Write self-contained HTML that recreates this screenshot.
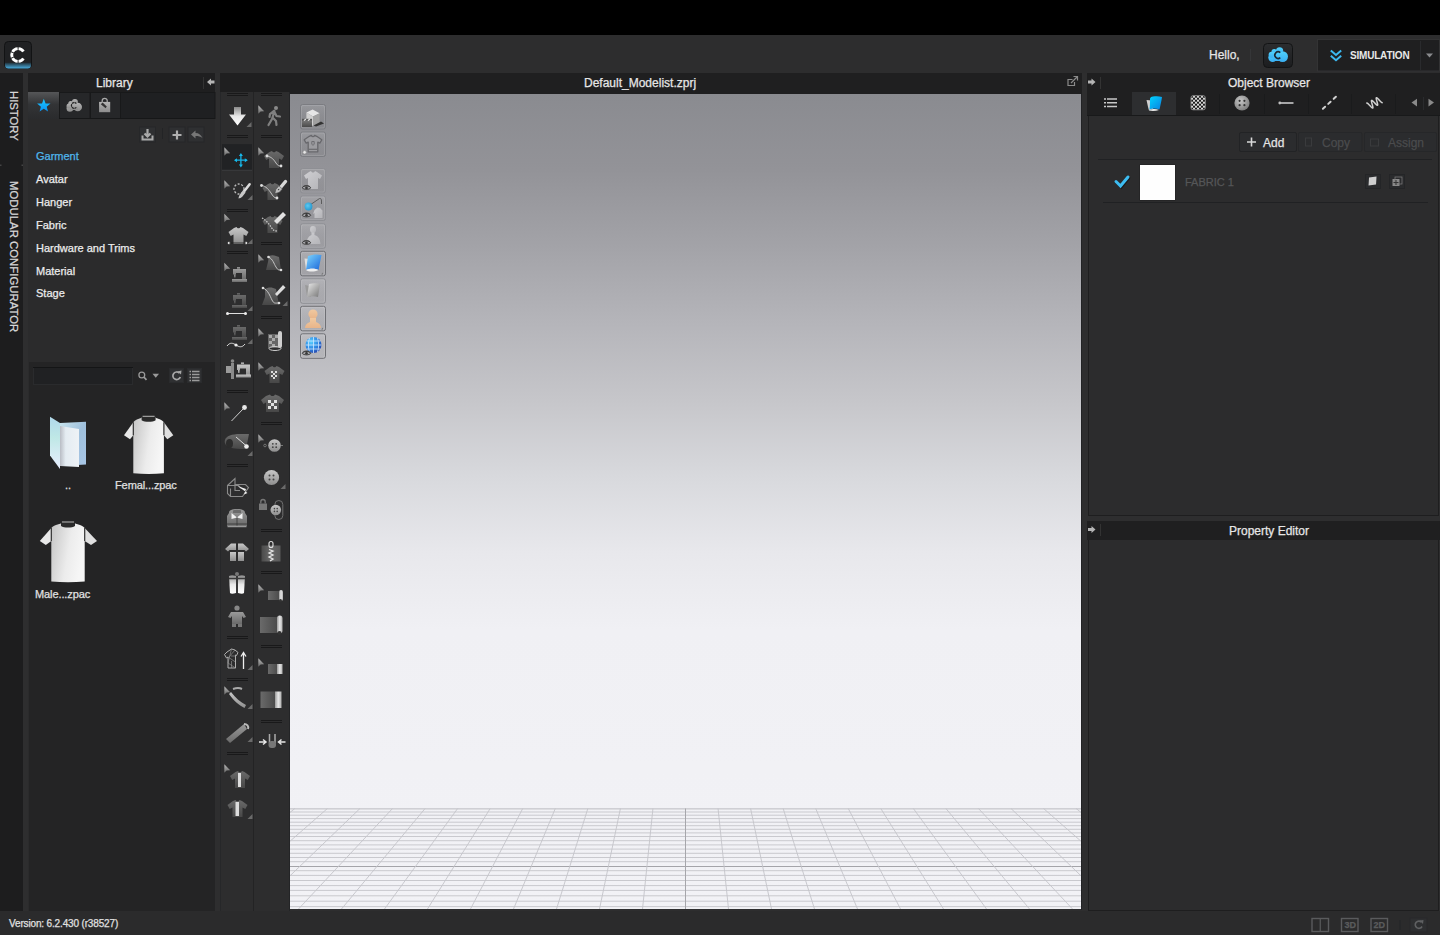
<!DOCTYPE html>
<html><head><meta charset="utf-8">
<style>
*{margin:0;padding:0;box-sizing:border-box}
html,body{width:1440px;height:935px;overflow:hidden;background:#000;font-family:"Liberation Sans",sans-serif;color:#ddd}
.a{position:absolute}
svg{position:absolute;overflow:visible}
#top{left:0;top:0;width:1440px;height:35px;background:#000}
#menu{left:0;top:35px;width:1440px;height:38px;background:#2d2d2e}
#main{left:0;top:73px;width:1440px;height:838px;background:#2e2e2f}
#side{left:0;top:73px;width:23px;height:838px;background:#1d1d1e}
#lib{left:28px;top:73px;width:187px;height:838px;background:#2b2b2c}
#libhd{left:28px;top:73px;width:187px;height:19px;background:#1f1f20}
#libtabs{left:28px;top:92px;width:187px;height:26px;background:#1f1f20}
#files{left:29px;top:362px;width:186px;height:549px;background:#242425}
#vphd{left:220px;top:73px;width:862px;height:21px;background:#1f1f20}
#tb{left:220px;top:92px;width:70px;height:819px;background:#2d2d2e}
#vp{left:290px;top:94px;width:791px;height:815px;background:linear-gradient(#8a8b90 0px,#939398 76px,#a3a3a8 153px,#b5b5ba 230px,#c6c6ca 306px,#d8d9dd 383px,#e8e8ec 459px,#f0f0f4 536px,#f2f2f6 815px)}
#rp{left:1087px;top:73px;width:353px;height:838px;background:#2e2e2f}
#obhd{left:1087px;top:73px;width:353px;height:19px;background:#1f1f20}
#obtabs{left:1087px;top:92px;width:353px;height:24px;background:#1f1f20}
#obc{left:1088px;top:116px;width:351px;height:400px;background:#2c2c2d;border-left:1px solid #1e1e1f;border-bottom:1px solid #1e1e1f;border-right:1px solid #1e1e1f}
#pehd{left:1087px;top:521px;width:353px;height:19px;background:#1f1f20}
#pec{left:1088px;top:540px;width:351px;height:371px;background:#2c2c2d;border-left:1px solid #1e1e1f;border-bottom:1px solid #1e1e1f;border-right:1px solid #1e1e1f}
#status{left:0;top:911px;width:1440px;height:24px;background:#2b2b2c}
.t{position:absolute;white-space:nowrap;font-size:11px;line-height:11px;color:#e6e6e6;-webkit-text-stroke:0.25px currentColor}
.t12{font-size:12px;line-height:12px}
.lib{left:36px;color:#ececec}
</style></head>
<body>
<div class="a" id="top"></div>
<div class="a" id="menu"></div>
<div class="a" id="main"></div>
<div class="a" id="side"></div>
<div class="a" id="lib"></div>
<div class="a" id="libhd"></div>
<div class="a" id="libtabs"></div>
<div class="a" id="files"></div>
<div class="a" id="vphd"></div>
<div class="a" id="tb"></div>
<div class="a" id="vp"></div>
<div class="a" id="rp"></div>
<div class="a" id="obhd"></div>
<div class="a" id="obtabs"></div>
<div class="a" id="obc"></div>
<div class="a" id="pehd"></div>
<div class="a" id="pec"></div>
<div class="a" id="status"></div>

<!-- header texts -->
<div class="t t12" style="left:96px;top:77px">Library</div>
<div class="t t12" style="left:584px;top:77px">Default_Modelist.zprj</div>
<div class="t t12" style="left:1228px;top:77px">Object Browser</div>
<div class="t t12" style="left:1229px;top:525px">Property Editor</div>
<div class="t t12" style="left:1209px;top:49px">Hello,</div>

<!-- library list -->
<div class="t lib" style="top:151px;color:#4fb6ec">Garment</div>
<div class="t lib" style="top:174px">Avatar</div>
<div class="t lib" style="top:197px">Hanger</div>
<div class="t lib" style="top:220px">Fabric</div>
<div class="t lib" style="top:243px">Hardware and Trims</div>
<div class="t lib" style="top:266px">Material</div>
<div class="t lib" style="top:288px">Stage</div>

<div class="t" style="left:9px;top:918.5px;font-size:10px;line-height:10px;letter-spacing:-0.15px;color:#e0e0e0">Version: 6.2.430 (r38527)</div>


<!-- menubar -->
<svg style="left:0;top:0" width="1440" height="935">
<defs>
<linearGradient id="logoBlue" x1="0" y1="0" x2="0" y2="1"><stop offset="0" stop-color="#1e2a31"/><stop offset="1" stop-color="#4aaee0"/></linearGradient>
<linearGradient id="btnG" x1="0" y1="0" x2="0" y2="1"><stop offset="0" stop-color="#2c2d2f"/><stop offset="1" stop-color="#1c1d1f"/></linearGradient>
<linearGradient id="cloudG" x1="0" y1="0" x2="0" y2="1"><stop offset="0" stop-color="#4fd0fb"/><stop offset="1" stop-color="#3ab0f3"/></linearGradient>
</defs>
<rect x="4.5" y="41.5" width="27" height="27" rx="4" fill="#202123" stroke="#121314"/>
<path d="M5 62.5H31V65a3.5 3.5 0 0 1-3.5 3.5h-19A3.5 3.5 0 0 1 5 65z" fill="url(#logoBlue)"/>
<path d="M18.54 48.67A6.35 6.35 0 0 1 23.43 51.54M12.55 51.92A6.35 6.35 0 0 1 17.66 48.67M12.17 57.28A6.35 6.35 0 0 1 12.17 52.72M17.66 61.33A6.35 6.35 0 0 1 12.55 58.08M23.43 58.46A6.35 6.35 0 0 1 18.54 61.33" fill="none" stroke="#fff" stroke-width="2.9" stroke-linecap="butt"/>
<line x1="1250.5" y1="49" x2="1250.5" y2="61" stroke="#353638"/>
<rect x="1263.5" y="43.5" width="29" height="24" rx="4" fill="url(#btnG)" stroke="#131415"/>
<g fill="url(#cloudG)"><circle cx="1272.6" cy="57.6" r="4.3"/><circle cx="1282.6" cy="56.6" r="5.4"/><circle cx="1279.6" cy="50.8" r="3.6"/><circle cx="1274.2" cy="51.8" r="2.7"/><circle cx="1271.6" cy="54.8" r="3"/><rect x="1273" y="52" width="10" height="9"/></g>
<path d="M1280.3 52.6A3.3 3.3 0 1 0 1280.3 57.6" fill="none" stroke="#1b2833" stroke-width="1.6"/>
<rect x="1317.5" y="39.5" width="122" height="31.5" fill="#1f1f20" stroke="#333334"/>
<line x1="1420.5" y1="41" x2="1420.5" y2="70" stroke="#2a2b2d"/>
<path d="M1330.8 50.5L1336 55 1341.2 50.5M1330.8 55.8L1336 60.3 1341.2 55.8" fill="none" stroke="#3cb8f0" stroke-width="2"/>
<path d="M1426 53.5H1433L1429.5 57.5Z" fill="#8a8b8d"/>
</svg>
<div class="t" style="left:1350px;top:51px;font-size:10px;line-height:10px;font-weight:bold;letter-spacing:-0.2px;color:#e8e8e8;-webkit-text-stroke:0">SIMULATION</div>

<!-- grid -->
<svg style="left:0;top:0" width="1440" height="935"><defs><clipPath id="vpclip"><rect x="290" y="808" width="791" height="101"/></clipPath></defs><g clip-path="url(#vpclip)"><line x1="290" y1="809.0" x2="1081" y2="809.0" stroke="#c9c9ce" stroke-width="1"/><line x1="290" y1="812.0" x2="1081" y2="812.0" stroke="#c9c9ce" stroke-width="1"/><line x1="290" y1="815.2" x2="1081" y2="815.2" stroke="#c9c9ce" stroke-width="1"/><line x1="290" y1="818.6" x2="1081" y2="818.6" stroke="#c9c9ce" stroke-width="1"/><line x1="290" y1="822.2" x2="1081" y2="822.2" stroke="#c9c9ce" stroke-width="1"/><line x1="290" y1="825.7" x2="1081" y2="825.7" stroke="#c9c9ce" stroke-width="1"/><line x1="290" y1="829.3" x2="1081" y2="829.3" stroke="#c9c9ce" stroke-width="1"/><line x1="290" y1="832.9" x2="1081" y2="832.9" stroke="#c9c9ce" stroke-width="1"/><line x1="290" y1="836.5" x2="1081" y2="836.5" stroke="#c9c9ce" stroke-width="1"/><line x1="290" y1="840.7" x2="1081" y2="840.7" stroke="#c9c9ce" stroke-width="1"/><line x1="290" y1="844.9" x2="1081" y2="844.9" stroke="#c9c9ce" stroke-width="1"/><line x1="290" y1="849.1" x2="1081" y2="849.1" stroke="#c9c9ce" stroke-width="1"/><line x1="290" y1="853.3" x2="1081" y2="853.3" stroke="#c9c9ce" stroke-width="1"/><line x1="290" y1="857.5" x2="1081" y2="857.5" stroke="#c9c9ce" stroke-width="1"/><line x1="290" y1="861.7" x2="1081" y2="861.7" stroke="#c9c9ce" stroke-width="1"/><line x1="290" y1="866.5" x2="1081" y2="866.5" stroke="#a4a4a9" stroke-width="1"/><line x1="290" y1="870.7" x2="1081" y2="870.7" stroke="#c9c9ce" stroke-width="1"/><line x1="290" y1="875.4" x2="1081" y2="875.4" stroke="#c9c9ce" stroke-width="1"/><line x1="290" y1="880.5" x2="1081" y2="880.5" stroke="#c9c9ce" stroke-width="1"/><line x1="290" y1="885.6" x2="1081" y2="885.6" stroke="#c9c9ce" stroke-width="1"/><line x1="290" y1="890.4" x2="1081" y2="890.4" stroke="#c9c9ce" stroke-width="1"/><line x1="290" y1="895.8" x2="1081" y2="895.8" stroke="#c9c9ce" stroke-width="1"/><line x1="290" y1="901.2" x2="1081" y2="901.2" stroke="#c9c9ce" stroke-width="1"/><line x1="290" y1="906.6" x2="1081" y2="906.6" stroke="#c9c9ce" stroke-width="1"/><line x1="290" y1="808.5" x2="1081" y2="808.5" stroke="#cfcfd4" stroke-width="1"/><line x1="-291.06" y1="808.5" x2="-604.52" y2="909" stroke="#c4c4c9" stroke-width="0.9"/><line x1="-258.51" y1="808.5" x2="-561.52" y2="909" stroke="#c4c4c9" stroke-width="0.9"/><line x1="-225.96" y1="808.5" x2="-518.52" y2="909" stroke="#c4c4c9" stroke-width="0.9"/><line x1="-193.40" y1="808.5" x2="-475.52" y2="909" stroke="#c4c4c9" stroke-width="0.9"/><line x1="-160.85" y1="808.5" x2="-432.52" y2="909" stroke="#c4c4c9" stroke-width="0.9"/><line x1="-128.30" y1="808.5" x2="-389.52" y2="909" stroke="#c4c4c9" stroke-width="0.9"/><line x1="-95.75" y1="808.5" x2="-346.52" y2="909" stroke="#c4c4c9" stroke-width="0.9"/><line x1="-63.20" y1="808.5" x2="-303.51" y2="909" stroke="#c4c4c9" stroke-width="0.9"/><line x1="-30.64" y1="808.5" x2="-260.51" y2="909" stroke="#c4c4c9" stroke-width="0.9"/><line x1="1.91" y1="808.5" x2="-217.51" y2="909" stroke="#c4c4c9" stroke-width="0.9"/><line x1="34.46" y1="808.5" x2="-174.51" y2="909" stroke="#c4c4c9" stroke-width="0.9"/><line x1="67.01" y1="808.5" x2="-131.51" y2="909" stroke="#c4c4c9" stroke-width="0.9"/><line x1="99.56" y1="808.5" x2="-88.51" y2="909" stroke="#c4c4c9" stroke-width="0.9"/><line x1="132.12" y1="808.5" x2="-45.51" y2="909" stroke="#c4c4c9" stroke-width="0.9"/><line x1="164.67" y1="808.5" x2="-2.51" y2="909" stroke="#c4c4c9" stroke-width="0.9"/><line x1="197.22" y1="808.5" x2="40.49" y2="909" stroke="#c4c4c9" stroke-width="0.9"/><line x1="229.77" y1="808.5" x2="83.49" y2="909" stroke="#c4c4c9" stroke-width="0.9"/><line x1="262.32" y1="808.5" x2="126.49" y2="909" stroke="#c4c4c9" stroke-width="0.9"/><line x1="294.88" y1="808.5" x2="169.49" y2="909" stroke="#c4c4c9" stroke-width="0.9"/><line x1="327.43" y1="808.5" x2="212.49" y2="909" stroke="#c4c4c9" stroke-width="0.9"/><line x1="359.98" y1="808.5" x2="255.49" y2="909" stroke="#c4c4c9" stroke-width="0.9"/><line x1="392.53" y1="808.5" x2="298.49" y2="909" stroke="#c4c4c9" stroke-width="0.9"/><line x1="425.08" y1="808.5" x2="341.49" y2="909" stroke="#c4c4c9" stroke-width="0.9"/><line x1="457.64" y1="808.5" x2="384.50" y2="909" stroke="#c4c4c9" stroke-width="0.9"/><line x1="490.19" y1="808.5" x2="427.50" y2="909" stroke="#c4c4c9" stroke-width="0.9"/><line x1="522.74" y1="808.5" x2="470.50" y2="909" stroke="#c4c4c9" stroke-width="0.9"/><line x1="555.29" y1="808.5" x2="513.50" y2="909" stroke="#c4c4c9" stroke-width="0.9"/><line x1="587.84" y1="808.5" x2="556.50" y2="909" stroke="#c4c4c9" stroke-width="0.9"/><line x1="620.40" y1="808.5" x2="599.50" y2="909" stroke="#c4c4c9" stroke-width="0.9"/><line x1="652.95" y1="808.5" x2="642.50" y2="909" stroke="#c4c4c9" stroke-width="0.9"/><line x1="685.50" y1="808.5" x2="685.50" y2="909" stroke="#a6a6ab" stroke-width="1"/><line x1="718.05" y1="808.5" x2="728.50" y2="909" stroke="#c4c4c9" stroke-width="0.9"/><line x1="750.60" y1="808.5" x2="771.50" y2="909" stroke="#c4c4c9" stroke-width="0.9"/><line x1="783.16" y1="808.5" x2="814.50" y2="909" stroke="#c4c4c9" stroke-width="0.9"/><line x1="815.71" y1="808.5" x2="857.50" y2="909" stroke="#c4c4c9" stroke-width="0.9"/><line x1="848.26" y1="808.5" x2="900.50" y2="909" stroke="#c4c4c9" stroke-width="0.9"/><line x1="880.81" y1="808.5" x2="943.50" y2="909" stroke="#c4c4c9" stroke-width="0.9"/><line x1="913.36" y1="808.5" x2="986.50" y2="909" stroke="#c4c4c9" stroke-width="0.9"/><line x1="945.92" y1="808.5" x2="1029.51" y2="909" stroke="#c4c4c9" stroke-width="0.9"/><line x1="978.47" y1="808.5" x2="1072.51" y2="909" stroke="#c4c4c9" stroke-width="0.9"/><line x1="1011.02" y1="808.5" x2="1115.51" y2="909" stroke="#c4c4c9" stroke-width="0.9"/><line x1="1043.57" y1="808.5" x2="1158.51" y2="909" stroke="#c4c4c9" stroke-width="0.9"/><line x1="1076.12" y1="808.5" x2="1201.51" y2="909" stroke="#c4c4c9" stroke-width="0.9"/><line x1="1108.68" y1="808.5" x2="1244.51" y2="909" stroke="#c4c4c9" stroke-width="0.9"/><line x1="1141.23" y1="808.5" x2="1287.51" y2="909" stroke="#c4c4c9" stroke-width="0.9"/><line x1="1173.78" y1="808.5" x2="1330.51" y2="909" stroke="#c4c4c9" stroke-width="0.9"/><line x1="1206.33" y1="808.5" x2="1373.51" y2="909" stroke="#c4c4c9" stroke-width="0.9"/><line x1="1238.88" y1="808.5" x2="1416.51" y2="909" stroke="#c4c4c9" stroke-width="0.9"/><line x1="1271.44" y1="808.5" x2="1459.51" y2="909" stroke="#c4c4c9" stroke-width="0.9"/><line x1="1303.99" y1="808.5" x2="1502.51" y2="909" stroke="#c4c4c9" stroke-width="0.9"/><line x1="1336.54" y1="808.5" x2="1545.51" y2="909" stroke="#c4c4c9" stroke-width="0.9"/><line x1="1369.09" y1="808.5" x2="1588.51" y2="909" stroke="#c4c4c9" stroke-width="0.9"/><line x1="1401.64" y1="808.5" x2="1631.51" y2="909" stroke="#c4c4c9" stroke-width="0.9"/><line x1="1434.20" y1="808.5" x2="1674.51" y2="909" stroke="#c4c4c9" stroke-width="0.9"/><line x1="1466.75" y1="808.5" x2="1717.52" y2="909" stroke="#c4c4c9" stroke-width="0.9"/><line x1="1499.30" y1="808.5" x2="1760.52" y2="909" stroke="#c4c4c9" stroke-width="0.9"/><line x1="1531.85" y1="808.5" x2="1803.52" y2="909" stroke="#c4c4c9" stroke-width="0.9"/><line x1="1564.40" y1="808.5" x2="1846.52" y2="909" stroke="#c4c4c9" stroke-width="0.9"/><line x1="1596.96" y1="808.5" x2="1889.52" y2="909" stroke="#c4c4c9" stroke-width="0.9"/><line x1="1629.51" y1="808.5" x2="1932.52" y2="909" stroke="#c4c4c9" stroke-width="0.9"/><line x1="1662.06" y1="808.5" x2="1975.52" y2="909" stroke="#c4c4c9" stroke-width="0.9"/></g></svg>
<!-- sidebar + library -->
<div class="t" style="left:7px;top:91px;font-size:11.3px;line-height:11px;transform-origin:0 0;transform:translate(12px,0) rotate(90deg);color:#d8d8d8;letter-spacing:0px">HISTORY</div>
<div class="t" style="left:7px;top:181px;font-size:11.3px;line-height:11px;transform-origin:0 0;transform:translate(12px,0) rotate(90deg);color:#d8d8d8;letter-spacing:0.05px">MODULAR CONFIGURATOR</div>
<svg style="left:0;top:0" width="1440" height="935">
<defs>
<linearGradient id="selTab" x1="0" y1="0" x2="0" y2="1"><stop offset="0" stop-color="#555658"/><stop offset="0.45" stop-color="#333436"/><stop offset="1" stop-color="#2a2b2d"/></linearGradient>
<linearGradient id="starG" x1="0" y1="0" x2="0" y2="1"><stop offset="0" stop-color="#1cc8ff"/><stop offset="1" stop-color="#0a92f2"/></linearGradient>
<linearGradient id="grayIc" x1="0" y1="0" x2="0" y2="1"><stop offset="0" stop-color="#b4b4b4"/><stop offset="1" stop-color="#8c8c8c"/></linearGradient>
</defs>
<rect x="0" y="164.5" width="1.5" height="1.5" fill="#444"/>
<rect x="21.5" y="164.5" width="1.5" height="1.5" fill="#444"/>
<line x1="203.5" y1="77" x2="203.5" y2="89" stroke="#333"/>
<path d="M207 82L211 78.5V80.5H214.5V83.5H211V85.5Z" fill="#b5b5b5"/>
<rect x="28" y="92" width="31" height="27" fill="url(#selTab)"/>
<rect x="59.5" y="92.5" width="30.5" height="26" fill="#262729" stroke="#18191a"/>
<rect x="90.5" y="92.5" width="30" height="26" fill="#262729" stroke="#18191a"/>
<rect x="120.5" y="92.5" width="94.5" height="26" fill="#1f2022" stroke="#18191a"/>
<rect x="59" y="118" width="156" height="1" fill="#161718"/>
<path d="M43.8 98.8L45.6 103.4 50.5 103.6 46.7 106.7 48 111.5 43.8 108.8 39.6 111.5 40.9 106.7 37.1 103.6 42 103.4Z" fill="url(#starG)"/>
<g fill="url(#grayIc)"><circle cx="69.9" cy="108.4" r="3.3"/><circle cx="77.7" cy="107" r="4.3"/><circle cx="74.9" cy="101.9" r="3"/><circle cx="70.8" cy="103.6" r="2.5"/><circle cx="69" cy="106" r="2.5"/><rect x="70" y="103" width="8" height="7"/></g>
<path d="M74.44 102.71A2.8 2.8 0 0 1 76.34 103.70M72.06 103.70A2.8 2.8 0 0 1 73.96 102.71M71.66 106.68A2.8 2.8 0 0 1 71.78 104.10M73.96 108.29A2.8 2.8 0 0 1 71.91 107.11M76.34 107.30A2.8 2.8 0 0 1 74.44 108.29" fill="none" stroke="#252525" stroke-width="1.2"/>
<rect x="99.1" y="101.9" width="11.1" height="10.3" fill="url(#grayIc)"/>
<path d="M102.2 102V100.8A2.5 2.5 0 0 1 107.2 100.8V102" fill="none" stroke="#aaa" stroke-width="1.3"/>
<path d="M100.8 104.2L102.6 102.6 106.8 106.6 105.6 108.2Z" fill="#333"/>
<rect x="139.5" y="127" width="16" height="15" fill="#2f3032" stroke="#262729"/>
<path d="M147.5 129V136M144.5 133.5L147.5 136.5 150.5 133.5" fill="none" stroke="#aaa" stroke-width="2.2"/>
<path d="M142.5 135.5V139.5H152.5V135.5" fill="none" stroke="#aaa" stroke-width="2"/>
<line x1="162.5" y1="128" x2="162.5" y2="139" stroke="#232426"/>
<rect x="169" y="127" width="16" height="15" fill="#2f3032" stroke="#262729"/>
<path d="M177 130.5V139.5M172.5 135H181.5" stroke="#b0b0b0" stroke-width="2.2"/>
<rect x="188" y="127" width="16" height="15" fill="#2f3032" stroke="#262729"/>
<path d="M191 134.5L195.5 130.5V133C199 133 201 135 202.5 138 200.5 136.5 198.5 136 195.5 136V138.5Z" fill="#777"/>
<rect x="33.5" y="367.5" width="99" height="17" fill="#202123" stroke="#2a2b2d"/>
<line x1="33" y1="367.5" x2="133" y2="367.5" stroke="#141516"/>
<circle cx="141.8" cy="375" r="2.9" fill="none" stroke="#9a9a9a" stroke-width="1.3"/>
<path d="M143.8 377L146.5 379.8" stroke="#9a9a9a" stroke-width="1.8"/>
<path d="M152.5 373.8H159L155.75 377.8Z" fill="#9a9a9a"/>
<rect x="169.5" y="368.5" width="14" height="14" fill="#2f3032" stroke="#2a2b2d"/>
<path d="M179.5 373.2A3.8 3.8 0 1 0 180.3 377" fill="none" stroke="#a8a8a8" stroke-width="1.7"/>
<path d="M177.5 371.5L181.5 370.5 181 374.5Z" fill="#a8a8a8"/>
<rect x="187.5" y="368.5" width="14" height="14" fill="#2f3032" stroke="#2a2b2d"/>
<path d="M189.5 371.5h1.5M192 371.5h7.5M189.5 374.5h1.5M192 374.5h7.5M189.5 377.5h1.5M192 377.5h7.5M189.5 380.5h1.5M192 380.5h7.5" stroke="#9a9a9a" stroke-width="1.6"/>
</svg>

<!-- right panel -->
<svg style="left:0;top:0" width="1440" height="935">
<defs>
<linearGradient id="blueSheet" x1="0" y1="0" x2="1" y2="1"><stop offset="0" stop-color="#00d4ff"/><stop offset="1" stop-color="#0a7fe0"/></linearGradient>
<radialGradient id="btnR" cx="0.4" cy="0.35" r="0.7"><stop offset="0" stop-color="#c8c8c8"/><stop offset="1" stop-color="#7a7a7a"/></radialGradient>
<pattern id="checker" x="1191" y="95.7" width="4" height="4" patternUnits="userSpaceOnUse"><rect width="4" height="4" fill="#d8d8d8"/><rect width="2" height="2" fill="#1a1a1a"/><rect x="2" y="2" width="2" height="2" fill="#1a1a1a"/></pattern>
</defs>
<line x1="1081.5" y1="94" x2="1081.5" y2="910" stroke="#222325"/>
<path d="M1072.5 79.5H1068V85.5H1074.5V82" fill="none" stroke="#8a8a8a" stroke-width="1.2"/>
<path d="M1071 83L1077 77M1073.5 76.5H1077.5V80.5" fill="none" stroke="#8a8a8a" stroke-width="1.2"/>
<path d="M1095.5 82L1091.5 78.5V80.5H1088V83.5H1091.5V85.5Z" fill="#b5b5b5"/>
<line x1="1100.5" y1="77" x2="1100.5" y2="89" stroke="#333"/>
<path d="M1095.5 529.5L1091.5 526V528H1088V531H1091.5V533Z" fill="#b5b5b5"/>
<line x1="1100.5" y1="524" x2="1100.5" y2="536" stroke="#333"/>
<line x1="1087" y1="115.5" x2="1440" y2="115.5" stroke="#18191a"/>
<rect x="1132" y="92" width="44" height="23" fill="#2d2e30"/>
<line x1="1219.5" y1="94" x2="1219.5" y2="114" stroke="#1a1b1c"/>
<line x1="1264.5" y1="94" x2="1264.5" y2="114" stroke="#1a1b1c"/>
<line x1="1308.5" y1="94" x2="1308.5" y2="114" stroke="#1a1b1c"/>
<line x1="1351.5" y1="94" x2="1351.5" y2="114" stroke="#1a1b1c"/>
<line x1="1395.5" y1="94" x2="1395.5" y2="114" stroke="#1a1b1c"/>
<line x1="1423.5" y1="97" x2="1423.5" y2="110" stroke="#2a2b2d"/>
<path d="M1104 99h2M1107 99h10M1104 102.8h2M1107 102.8h10M1104 106.5h2M1107 106.5h10" stroke="#c8c8c8" stroke-width="1.6"/>
<path d="M1146.5 100L1152 100.5 1153 109 1149 110.5C1148 108 1147.5 104 1146.5 100Z" fill="#d0d0d0"/><path d="M1149 110.5C1152 108.5 1156 108.5 1159 110 1156 111 1152 111.2 1149 110.5Z" fill="#e8e8e8"/>
<path d="M1150 98.5C1150.5 97.2 1151.5 96.8 1153 96.5 1156 96 1159 96 1162 97 1161.5 101 1160.5 105 1159.5 109.5 1156 108 1152.5 108 1149.5 109.5 1150 106 1150 102 1150 98.5Z" fill="url(#blueSheet)"/>
<rect x="1191" y="95.7" width="14.3" height="14.1" rx="2" fill="url(#checker)"/>
<rect x="1191" y="95.7" width="14.3" height="14.1" rx="2" fill="none" stroke="#9a9a9a" stroke-width="0.8"/>
<circle cx="1242" cy="103" r="7.6" fill="url(#btnR)"/>
<circle cx="1239.6" cy="100.8" r="1.1" fill="#333"/><circle cx="1244.4" cy="100.8" r="1.1" fill="#333"/><circle cx="1239.6" cy="105.2" r="1.1" fill="#333"/><circle cx="1244.4" cy="105.2" r="1.1" fill="#333"/>
<circle cx="1279.8" cy="103" r="1.4" fill="#c0c0c0"/>
<line x1="1279.5" y1="103" x2="1293.5" y2="103" stroke="#c0c0c0" stroke-width="1.7"/>
<path d="M1322.90 108.80L1325.11 106.76M1328.23 103.88L1330.57 101.72M1333.69 98.84L1335.90 96.80" stroke="#d0d0d0" stroke-width="2" stroke-linecap="round"/>
<path d="M1366.83 103.06 L1367.02 103.04 L1367.27 103.13 L1367.58 103.34 L1367.95 103.65 L1368.36 104.04 L1368.82 104.50 L1369.30 105.00 L1369.79 105.53 L1370.28 106.06 L1370.76 106.56 L1371.22 107.02 L1371.63 107.41 L1372.00 107.72 L1372.31 107.93 L1372.56 108.02 L1372.75 108.00 L1372.86 107.85 L1372.91 107.59 L1372.89 107.22 L1372.82 106.74 L1372.70 106.18 L1372.55 105.56 L1372.37 104.89 L1372.17 104.19 L1371.97 103.49 L1371.79 102.82 L1371.64 102.20 L1371.52 101.64 L1371.45 101.16 L1371.43 100.79 L1371.48 100.53 L1371.59 100.38 L1371.78 100.36 L1372.03 100.45 L1372.34 100.66 L1372.71 100.97 L1373.12 101.36 L1373.58 101.82 L1374.06 102.32 L1374.55 102.85 L1375.04 103.38 L1375.52 103.88 L1375.98 104.34 L1376.39 104.73 L1376.76 105.04 L1377.07 105.25 L1377.32 105.34 L1377.51 105.32 L1377.62 105.17 L1377.67 104.91 L1377.65 104.54 L1377.58 104.06 L1377.46 103.50 L1377.31 102.88 L1377.13 102.21 L1376.93 101.51 L1376.73 100.81 L1376.55 100.14 L1376.40 99.52 L1376.28 98.96 L1376.21 98.48 L1376.19 98.11 L1376.24 97.85 L1376.35 97.70 L1376.54 97.68 L1376.79 97.77 L1377.10 97.98 L1377.47 98.29 L1377.88 98.68 L1378.34 99.14 L1378.82 99.64 L1379.31 100.17 L1379.80 100.70 L1380.28 101.20 L1380.74 101.66 L1381.15 102.05 L1381.52 102.36 L1381.83 102.57 L1382.08 102.66 L1382.27 102.64" fill="none" stroke="#cfcfcf" stroke-width="1.5" stroke-linecap="round" stroke-linejoin="round"/>
<path d="M1417 98.8V106.4L1411.5 102.6Z" fill="#8a8a8a"/>
<path d="M1428.5 98.8V106.4L1434 102.6Z" fill="#8a8a8a"/>
<line x1="1098" y1="159.5" x2="1432" y2="159.5" stroke="#202123"/>
<line x1="1103" y1="202.5" x2="1428" y2="202.5" stroke="#202123"/>
<rect x="1239.5" y="132.5" width="57" height="19" rx="1.5" fill="#2b2c2e" stroke="#222325"/>
<rect x="1298.5" y="132.5" width="63.5" height="19" rx="1.5" fill="#2b2c2e" stroke="#262729"/>
<rect x="1364.5" y="132.5" width="72" height="19" rx="1.5" fill="#2b2c2e" stroke="#262729"/>
<path d="M1251.5 137.5V146.5M1247 142H1256" stroke="#d8d8d8" stroke-width="1.6"/>
<rect x="1305.5" y="138" width="6" height="8" fill="none" stroke="#3a3b3d" stroke-width="1"/>
<rect x="1370.5" y="139" width="8" height="7" fill="none" stroke="#3a3b3d" stroke-width="1"/>
<path d="M1116 181.5L1120.5 186 1128 177" fill="none" stroke="#1a1b1c" stroke-width="3" stroke-linecap="round" transform="translate(0.8,1)"/>
<path d="M1116 181.5L1120.5 186 1128 177" fill="none" stroke="#3dbdf2" stroke-width="3" stroke-linecap="round"/>
<rect x="1139.5" y="164.5" width="36" height="36" fill="#1e1f21"/>
<rect x="1140" y="165" width="35" height="35" fill="#fefefe"/>
<rect x="1365.5" y="174.5" width="15" height="14" fill="#2a2b2d" stroke="#242527"/>
<path d="M1369 177.5L1376.5 176.5 1376 184.5 1368.5 185.5Z" fill="#cfcfcf"/>
<rect x="1389.5" y="174.5" width="15" height="14" fill="#2a2b2d" stroke="#242527"/>
<rect x="1392.5" y="179" width="7" height="7" fill="#8a8a8a"/>
<rect x="1395" y="177" width="7" height="7" fill="none" stroke="#777" stroke-width="0.8"/>
<path d="M1396 180V185M1393.5 182.5H1398.5" stroke="#333" stroke-width="1"/>
<!-- status icons -->
<rect x="1312" y="918.5" width="16.5" height="13" fill="none" stroke="#5a5b5d" stroke-width="1.4"/>
<line x1="1320.25" y1="918.5" x2="1320.25" y2="931.5" stroke="#5a5b5d" stroke-width="1.2"/>
<rect x="1341.5" y="918.5" width="16.5" height="13" fill="none" stroke="#5a5b5d" stroke-width="1.4"/>
<rect x="1371" y="918.5" width="16.5" height="13" fill="none" stroke="#5a5b5d" stroke-width="1.4"/>
<line x1="1400" y1="920" x2="1400" y2="930" stroke="#232426"/>
<rect x="1410" y="918" width="17" height="14" fill="#2e2f31" stroke="#28292b"/>
<path d="M1421.5 922.3A3.6 3.6 0 1 0 1422 926.5" fill="none" stroke="#5f6062" stroke-width="1.6"/>
<path d="M1419.5 920.5L1423.5 920 1423 924Z" fill="#5f6062"/>
</svg>
<div class="t t12" style="left:1263px;top:137px;color:#e4e4e4">Add</div>
<div class="t t12" style="left:1322px;top:137px;color:#4a4b4d">Copy</div>
<div class="t t12" style="left:1388px;top:137px;color:#4a4b4d">Assign</div>
<div class="t" style="left:1185px;top:177px;color:#555658">FABRIC 1</div>
<div class="t" style="left:1344.5px;top:921px;font-size:9px;line-height:9px;font-weight:bold;color:#5a5b5d">3D</div>
<div class="t" style="left:1373.5px;top:921px;font-size:9px;line-height:9px;font-weight:bold;color:#5a5b5d">2D</div>
<!--TB--><svg style="left:0;top:0" width="1440" height="935"><defs>
<linearGradient id="gPtr" x1="0" y1="0" x2="0" y2="1"><stop offset="0" stop-color="#b8b8b8"/><stop offset="1" stop-color="#686868"/></linearGradient>
<linearGradient id="gWhite" x1="0" y1="0" x2="0" y2="1"><stop offset="0" stop-color="#8a8a8a"/><stop offset="0.5" stop-color="#e8e8e8"/><stop offset="1" stop-color="#ffffff"/></linearGradient>
<linearGradient id="gDark" x1="0" y1="0" x2="0" y2="1"><stop offset="0" stop-color="#6a6a6a"/><stop offset="1" stop-color="#474747"/></linearGradient>
<linearGradient id="gMid" x1="0" y1="0" x2="0" y2="1"><stop offset="0" stop-color="#9a9a9a"/><stop offset="1" stop-color="#6a6a6a"/></linearGradient>
<linearGradient id="gLight" x1="0" y1="0" x2="0" y2="1"><stop offset="0" stop-color="#c8c8c8"/><stop offset="1" stop-color="#8e8e8e"/></linearGradient>
<linearGradient id="gRoll" x1="0" y1="0" x2="1" y2="0"><stop offset="0" stop-color="#454545"/><stop offset="0.75" stop-color="#7a7a7a"/><stop offset="0.76" stop-color="#bdbdbd"/><stop offset="1" stop-color="#e0e0e0"/></linearGradient>
<linearGradient id="gZip" x1="0" y1="0" x2="1" y2="0"><stop offset="0" stop-color="#4a4a4a"/><stop offset="0.5" stop-color="#6a6a6a"/><stop offset="1" stop-color="#5a5a5a"/></linearGradient>
<linearGradient id="gBody" x1="0" y1="0" x2="1" y2="0"><stop offset="0" stop-color="#6a6a6a"/><stop offset="1" stop-color="#4a4a4a"/></linearGradient><linearGradient id="gCyl" x1="0" y1="0" x2="1" y2="0"><stop offset="0" stop-color="#9a9a9a"/><stop offset="0.5" stop-color="#e8e8e8"/><stop offset="1" stop-color="#b0b0b0"/></linearGradient>
<symbol id="ptr" overflow="visible"><path d="M0.3 0.3L6.2 6.2 2.6 6.6 0.3 8.8Z" fill="url(#gPtr)"/></symbol>
<symbol id="cor" overflow="visible"><path d="M5 0V5H0Z" fill="#6a6a6a"/></symbol>
<symbol id="shirt" overflow="visible"><path d="M-4.5 -8L-2 -9C-1.2 -7.2 1.2 -7.2 2 -9L4.5 -8 10 -4 7.8 0 5 -1.6V8H-5V-1.6L-7.8 0-10-4Z"/></symbol>
</defs><path d="M227.0 93.5H248.0M227.0 95.5H248.0" stroke="#19191a" stroke-width="1"/><path d="M227.0 135.5H248.0M227.0 137.5H248.0" stroke="#19191a" stroke-width="1"/><path d="M227.0 209.5H248.0M227.0 211.5H248.0" stroke="#19191a" stroke-width="1"/><path d="M227.0 251.5H248.0M227.0 253.5H248.0" stroke="#19191a" stroke-width="1"/><path d="M227.0 390.5H248.0M227.0 392.5H248.0" stroke="#19191a" stroke-width="1"/><path d="M227.0 464.5H248.0M227.0 466.5H248.0" stroke="#19191a" stroke-width="1"/><path d="M227.0 636.5H248.0M227.0 638.5H248.0" stroke="#19191a" stroke-width="1"/><path d="M227.0 678.5H248.0M227.0 680.5H248.0" stroke="#19191a" stroke-width="1"/><path d="M227.0 752.5H248.0M227.0 754.5H248.0" stroke="#19191a" stroke-width="1"/><path d="M261.0 93.5H282.0M261.0 95.5H282.0" stroke="#19191a" stroke-width="1"/><path d="M261.0 135.5H282.0M261.0 137.5H282.0" stroke="#19191a" stroke-width="1"/><path d="M261.0 242.5H282.0M261.0 244.5H282.0" stroke="#19191a" stroke-width="1"/><path d="M261.0 316.5H282.0M261.0 318.5H282.0" stroke="#19191a" stroke-width="1"/><path d="M261.0 422.5H282.0M261.0 424.5H282.0" stroke="#19191a" stroke-width="1"/><path d="M261.0 529.5H282.0M261.0 531.5H282.0" stroke="#19191a" stroke-width="1"/><path d="M261.0 571.5H282.0M261.0 573.5H282.0" stroke="#19191a" stroke-width="1"/><path d="M261.0 645.5H282.0M261.0 647.5H282.0" stroke="#19191a" stroke-width="1"/><path d="M261.0 720.5H282.0M261.0 722.5H282.0" stroke="#19191a" stroke-width="1"/><line x1="220.5" y1="92" x2="220.5" y2="911" stroke="#262729"/><line x1="253.5" y1="92" x2="253.5" y2="911" stroke="#232324"/><line x1="289.5" y1="92" x2="289.5" y2="911" stroke="#232426"/><path d="M234.0 107H241.0V114.5H246.0L237.5 125.5 229.0 114.5H234.0Z" fill="url(#gWhite)"/><use href="#cor" x="246.5" y="122"/><rect x="222" y="144.2" width="30" height="25.3" fill="#212224"/><line x1="222" y1="170.5" x2="252" y2="170.5" stroke="#37383a"/><use href="#ptr" x="224" y="147"/><path d="M240.9 154.5V166M235 160.2H246.8" stroke="#1ab4e6" stroke-width="1.3"/><path d="M240.9 153L238.9 156H242.9ZM240.9 167.4L238.9 164.4H242.9ZM234 160.2L237 158.2V162.2ZM247.8 160.2L244.8 158.2V162.2Z" fill="#15b8ea"/><use href="#ptr" x="224" y="180"/><circle cx="239" cy="189" r="5" fill="none" stroke="#bdbdbd" stroke-width="1.3" stroke-dasharray="2 1.6"/><path d="M249.6 184.3L244.2 191.2" stroke="#dcdcdc" stroke-width="2.6" stroke-linecap="round"/><path d="M243 190.2L245.6 192.4 242.5 196.5C241.5 197.8 239.5 198.5 238.5 198.5 238.6 197.2 239.3 195.2 240.3 194Z" fill="#c8c8c8"/><use href="#cor" x="247.5" y="195"/><use href="#ptr" x="224" y="213.5"/><g fill="url(#gLight)"><use href="#shirt" x="238.5" y="236"/></g><circle cx="229" cy="243" r="1.3" fill="#ddd"/><circle cx="246" cy="243" r="1.3" fill="#ddd"/><path d="M229 243H246" stroke="#1d1d1d" stroke-width="0.8"/><use href="#cor" x="247.5" y="239"/><use href="#ptr" x="224" y="262.5"/><path d="M233 269h13v11h-4v-7h-6v1.5h-3z" fill="url(#gMid)"/><path d="M232 279h15v3h-15z" fill="url(#gMid)"/><path d="M234 274.5h1.6v3h-1.6z" fill="url(#gMid)"/><path d="M237 267h3v2h-3z" fill="url(#gMid)"/><path d="M233 295h13v11h-4v-7h-6v1.5h-3z" fill="url(#gDark)"/><path d="M232 305h15v3h-15z" fill="url(#gDark)"/><path d="M234 300.5h1.6v3h-1.6z" fill="url(#gDark)"/><path d="M237 293h3v2h-3z" fill="url(#gDark)"/><path d="M227.5 313.5H245.5" stroke="#e0e0e0" stroke-width="1"/><circle cx="227.5" cy="313.5" r="1.5" fill="#eee"/><circle cx="245.5" cy="313.5" r="1.5" fill="#eee"/><use href="#cor" x="247.5" y="306"/><path d="M233 327h13v11h-4v-7h-6v1.5h-3z" fill="url(#gDark)"/><path d="M232 337h15v3h-15z" fill="url(#gDark)"/><path d="M234 332.5h1.6v3h-1.6z" fill="url(#gDark)"/><path d="M237 325h3v2h-3z" fill="url(#gDark)"/><path d="M227 346C230 342 233 343 236 345S242 348 245 344" fill="none" stroke="#dcdcdc" stroke-width="1"/><circle cx="236" cy="345" r="1.6" fill="#eee"/><use href="#cor" x="247.5" y="339"/><circle cx="232.5" cy="361" r="1.8" fill="#8a8a8a"/><path d="M231 363h3v16h-3z" fill="#8a8a8a"/><path d="M226 366h5v7h-5z" fill="#9a9a9a"/><path d="M237 364.5h13v11h-4v-7h-6v1.5h-3z" fill="url(#gLight)"/><path d="M236 374.5h15v3h-15z" fill="url(#gLight)"/><path d="M238 370.0h1.6v3h-1.6z" fill="url(#gLight)"/><path d="M241 362.5h3v2h-3z" fill="url(#gLight)"/><use href="#ptr" x="224" y="402"/><path d="M231.5 421L243.5 408.5" stroke="#cfcfcf" stroke-width="1"/><circle cx="244.5" cy="407.5" r="2.4" fill="#e8e8e8"/><path d="M225 440C226 436 232 434 240 434L249 434 246 449C240 449 234 449 229 447 226 446 224 443 225 440Z" fill="url(#gDark)"/><ellipse cx="229.5" cy="443.5" rx="3.5" ry="4.5" fill="#2c2c2c"/><path d="M236 437L246.5 446" stroke="#ddd" stroke-width="1"/><circle cx="246.5" cy="446.5" r="2.3" fill="#eee"/><use href="#cor" x="247.5" y="451"/><path d="M227.5 485.5L235 478.5V484.5H245.5L248.5 487.5 242.5 496.5H230.5L227.5 493.5Z" fill="none" stroke="#8a8a8a" stroke-width="1.1"/><path d="M227.5 485.5H238.5L241.5 488.5M230.5 488.5V496.5M235 484.5V490.5H240" fill="none" stroke="#8a8a8a" stroke-width="1.1"/><path d="M237.5 486L247.5 493 244 494.5 246 489Z" fill="#efefef"/><path d="M229 513C229 510 232 509 237 509 242 509 245 510 245 513L247 516V526H227V516Z" fill="url(#gMid)"/><path d="M233 510.5C234 509.5 240 509.5 241 510.5V513H233Z" fill="#6a6a6a"/><path d="M231.5 513L237 517.5 231.5 519ZM242.5 513L237 517.5 242.5 519Z" fill="#f0f0f0"/><path d="M237 517.5V526" stroke="#444" stroke-width="1"/><path d="M227.5 526.5H246.5" stroke="#9a9a9a" stroke-width="1.5"/><path d="M227 524H247" stroke="#333" stroke-width="0.8"/><path d="M225 549L231 543.5H236V550H229.5L228 551.5ZM249 549L243 543.5H238V550H244.5L246 551.5Z" fill="url(#gLight)"/><rect x="230" y="552" width="6" height="9" fill="url(#gLight)"/><rect x="238" y="552" width="6" height="9" fill="url(#gLight)"/><path d="M229 576C231 575 233 575 236 576V593C233 594 231 594 230 593Z" fill="url(#gWhite)"/><path d="M245 576C243 575 241 575 238 576V593C241 594 243 594 244 593Z" fill="url(#gWhite)"/><circle cx="237" cy="574" r="2" fill="#777"/><path d="M237 576V593M229 578.5H245" stroke="#3a3a3a" stroke-width="1.6"/><circle cx="237" cy="608" r="2.6" fill="#888"/><path d="M231 612H243L246 617 243.5 618 242 616V624H232V616L230.5 618 228 617Z" fill="url(#gMid)"/><path d="M232 624H236V627H232ZM238 624H242V627H238Z" fill="#777"/><path d="M227 652L231.5 649 235 650 238 652.5 236.5 655.5 235.5 655V668H228V657L226.5 658 224.5 654.5Z" fill="none" stroke="#b0b0b0" stroke-width="1"/><path d="M228 657L235.5 662M231.5 649L228 663M235 650L229 657M228 663L235.5 668M231 656L235.5 656M231.5 661L231.5 668" stroke="#9a9a9a" stroke-width="0.6"/><path d="M243.5 669V653M241 656.5L243.5 652.5 246 656.5" fill="none" stroke="#eee" stroke-width="1.3"/><use href="#cor" x="247.5" y="665"/><use href="#ptr" x="224" y="686"/><path d="M231 692C236 698 240 702 246 705L244.5 708C238.5 705 234 701 229 694Z" fill="url(#gLight)"/><path d="M233 689C236 688 240 688 242 689" fill="none" stroke="#aaa" stroke-width="2"/><use href="#cor" x="247.5" y="704"/><path d="M226 739L244 724 247 729 230 743Z" fill="url(#gMid)"/><path d="M244 724C247 724 249 726 248 729" fill="none" stroke="#bbb" stroke-width="2"/><use href="#cor" x="247.5" y="737"/><use href="#ptr" x="224" y="764"/><g fill="url(#gDark)"><use href="#shirt" x="240.0" y="780"/></g><rect x="238" y="773" width="3" height="14" fill="#ddd"/><g fill="url(#gDark)"><use href="#shirt" x="237.5" y="809"/></g><rect x="235.5" y="802" width="3.5" height="14" fill="#ddd"/><use href="#cor" x="247.5" y="814"/><use href="#ptr" x="258" y="105"/><circle cx="276" cy="108" r="2" fill="#8a8a8a"/><path d="M274 111L270 114 269.5 117M274 111L276.5 116 280 116.5M274.5 111L272 119 268.5 125M273 118L276 121 276.5 125" fill="none" stroke="#808080" stroke-width="2.2" stroke-linecap="round"/><use href="#ptr" x="258" y="147"/><g fill="url(#gDark)"><use href="#shirt" x="274.0" y="160"/></g><path d="M267 156C272 157 274 160 276 163S279 166 281 166" fill="none" stroke="#d0d0d0" stroke-width="0.9"/><circle cx="267" cy="156" r="1.4" fill="#ddd"/><circle cx="281" cy="166" r="1.4" fill="#ddd"/><g fill="url(#gDark)"><use href="#shirt" x="272.5" y="192"/></g><path d="M261.5 185.5C266 186 269 190 271 193S274 198 277 198" fill="none" stroke="#d0d0d0" stroke-width="0.9"/><circle cx="261.5" cy="185.5" r="1.4" fill="#ddd"/><circle cx="277" cy="198" r="1.4" fill="#ddd"/><path d="M285.5 181.5L280.5 187.5" stroke="#d8d8d8" stroke-width="3.4" stroke-linecap="round"/><path d="M278.8 185.8L282.4 189 279 192.5 274.8 193.6 275.8 189.5Z" fill="#bdbdbd" stroke="#3a3a3a" stroke-width="0.5"/><circle cx="278.6" cy="189.6" r="0.7" fill="#333"/><g fill="url(#gDark)"><use href="#shirt" x="272.5" y="225"/></g><path d="M262 218C266 220 269 224 271 227S274 231 277 231" fill="none" stroke="#d0d0d0" stroke-width="1.2" stroke-dasharray="1.5 1.2"/><path d="M283 212L286 215 277 224 274 221Z" fill="#e0e0e0"/><use href="#ptr" x="258" y="254"/><path d="M269 256C271 255 274 255 276 256L279 257 281 270H266L268 262Z" fill="url(#gDark)"/><path d="M268.5 257C273 259 274 264 276 267S278 270 281 270" fill="none" stroke="#d0d0d0" stroke-width="0.9"/><circle cx="268.5" cy="257" r="1.3" fill="#ddd"/><circle cx="281" cy="270" r="1.3" fill="#ddd"/><path d="M265 289C267 288 270 287 273 288L276 289 279 305H262L265 297Z" fill="url(#gDark)"/><path d="M263 288C268 290 270 296 272 300S275 303 279 303" fill="none" stroke="#d0d0d0" stroke-width="0.9"/><circle cx="263" cy="288" r="1.3" fill="#ddd"/><circle cx="279" cy="303" r="1.3" fill="#ddd"/><path d="M283 285L285.5 287.5 277 296 275 294Z" fill="#ddd"/><use href="#cor" x="282.5" y="301"/><use href="#ptr" x="258" y="328"/><path d="M268 334H280V348H268Z" fill="#666"/><path d="M269 335h3v3h-3zM272 338h3v3h-3zM269 341h3v3h-3zM272 344h3v3h-3zM275 335h3v3h-3z" fill="#aaa"/><rect x="278" y="331" width="4" height="17" rx="2" fill="#cfcfcf"/><ellipse cx="275" cy="348.5" rx="6" ry="2" fill="none" stroke="#ccc" stroke-width="1"/><use href="#ptr" x="258" y="362"/><g fill="url(#gDark)"><use href="#shirt" x="274.5" y="375"/></g><path d="M271 371h2v2h-2zM275 371h2v2h-2zM273 373h2v2h-2zM271 375h2v2h-2zM275 375h2v2h-2zM273 377h2v2h-2z" fill="#ddd"/><path d="M266 396L270 394.5C271 396.5 274 396.5 275 394.5L279 396 284 400 281.5 404 279 402.5V412H266V402.5L263.5 404 261 400Z" fill="url(#gDark)"/><path d="M268 400h3v3h-3zM274 400h3v3h-3zM271 403h3v3h-3zM268 406h3v3h-3zM274 406h3v3h-3z" fill="#e0e0e0"/><use href="#ptr" x="258" y="434"/><circle cx="274.5" cy="445.5" r="6.3" fill="url(#gLight)"/><circle cx="265" cy="445.5" r="1.3" fill="none" stroke="#888" stroke-width="0.7"/><path d="M281 445.5h2" stroke="#777"/><circle cx="272.8" cy="443.8" r="0.9" fill="#444"/><circle cx="276.2" cy="443.8" r="0.9" fill="#444"/><circle cx="272.8" cy="447.2" r="0.9" fill="#444"/><circle cx="276.2" cy="447.2" r="0.9" fill="#444"/><circle cx="271.5" cy="477.5" r="7.6" fill="url(#gLight)"/><circle cx="269.5" cy="475.5" r="1" fill="#444"/><circle cx="273.5" cy="475.5" r="1" fill="#444"/><circle cx="269.5" cy="479.5" r="1" fill="#444"/><circle cx="273.5" cy="479.5" r="1" fill="#444"/><use href="#cor" x="280.5" y="484"/><path d="M259 503.5h8v6.5h-8z" fill="#777"/><path d="M260.8 503.5v-1.8a2.2 2.2 0 0 1 4.4 0v1.8" fill="none" stroke="#777" stroke-width="1.3"/><rect x="274.8" y="500.5" width="8" height="19" rx="4" fill="none" stroke="#777" stroke-width="0.9"/><circle cx="275.8" cy="510" r="5.3" fill="url(#gLight)"/><circle cx="274.4" cy="508.6" r="0.8" fill="#444"/><circle cx="277.2" cy="508.6" r="0.8" fill="#444"/><circle cx="274.4" cy="511.4" r="0.8" fill="#444"/><circle cx="277.2" cy="511.4" r="0.8" fill="#444"/><rect x="261.5" y="545.5" width="19" height="16" fill="url(#gZip)"/><path d="M269 549.5L273 551 269 553 273 555 269 557 273 559 270 561" fill="none" stroke="#e8e8e8" stroke-width="1.3"/><rect x="269" y="541.5" width="4" height="6" rx="2" fill="none" stroke="#e0e0e0" stroke-width="1.1"/><use href="#ptr" x="258" y="584"/><rect x="268" y="591" width="12" height="9" fill="url(#gBody)"/><rect x="279" y="590" width="4" height="11" rx="2" fill="url(#gCyl)"/><circle cx="280.5" cy="600.5" r="1.5" fill="#333"/><rect x="260" y="617" width="18" height="16" fill="url(#gBody)"/><rect x="277" y="615.5" width="5.5" height="18" rx="2.7" fill="url(#gCyl)"/><circle cx="279.5" cy="633" r="2" fill="#333"/><use href="#ptr" x="258" y="658"/><rect x="268" y="664" width="10" height="10" fill="url(#gBody)"/><rect x="277" y="664" width="5.5" height="10" fill="url(#gCyl)"/><rect x="260.5" y="691.5" width="15" height="16.5" fill="url(#gBody)"/><rect x="275" y="691.5" width="6.5" height="16.5" fill="url(#gCyl)"/><path d="M269.5 734V743M275 734V743" stroke="#aaa" stroke-width="1.5"/><rect x="268.5" y="741" width="7.5" height="7" rx="3" fill="#777"/><path d="M259 742H265M263 739.5L266 742 263 744.5M285.5 742H279.5M281.5 739.5L278.5 742 281.5 744.5" fill="none" stroke="#e6e6e6" stroke-width="1.5"/></svg><!--/TB-->
<!--VPI--><svg style="left:0;top:0" width="1440" height="935"><defs>
<linearGradient id="vBox" x1="0" y1="0" x2="0" y2="1"><stop offset="0" stop-color="#ffffff" stop-opacity="0.10"/><stop offset="1" stop-color="#000000" stop-opacity="0.04"/></linearGradient>
<linearGradient id="vBlue" x1="0" y1="0" x2="1" y2="1"><stop offset="0" stop-color="#7fd8ff"/><stop offset="1" stop-color="#1a64d8"/></linearGradient>
<linearGradient id="vGray" x1="0" y1="0" x2="1" y2="1"><stop offset="0" stop-color="#e8e8e8"/><stop offset="1" stop-color="#777"/></linearGradient>
<linearGradient id="vSkin" x1="0" y1="0" x2="0" y2="1"><stop offset="0" stop-color="#f0c9a0"/><stop offset="1" stop-color="#e8b58a"/></linearGradient>
<radialGradient id="vGlobe" cx="0.35" cy="0.3" r="0.8"><stop offset="0" stop-color="#5ad0ff"/><stop offset="0.6" stop-color="#2a80e0"/><stop offset="1" stop-color="#2a3aa0"/></radialGradient>
<linearGradient id="vClap" x1="0" y1="0" x2="0" y2="1"><stop offset="0" stop-color="#777"/><stop offset="1" stop-color="#4a4a4a"/></linearGradient>
<linearGradient id="vShirt" x1="0" y1="0" x2="1" y2="1"><stop offset="0" stop-color="#cfcfd2"/><stop offset="1" stop-color="#b4b4b8"/></linearGradient><radialGradient id="vDot" cx="0.4" cy="0.4" r="0.6"><stop offset="0" stop-color="#5cc8f0"/><stop offset="1" stop-color="#2a9ad0"/></radialGradient>
<symbol id="eye" overflow="visible"><path d="M-4.3 0.3C-2.7 -2.8 2.7 -2.8 4.3 0.3 2.7 2.4 -2.7 2.4 -4.3 0.3Z" fill="#a8a8ac" stroke="#3a3a3a" stroke-width="0.9"/><path d="M-4.3 0.3C-2.7 -2.8 2.7 -2.8 4.3 0.3 2.7 -1.4 -2.7 -1.4 -4.3 0.3Z" fill="#3a3a3a"/><circle cx="0" cy="0.4" r="1.4" fill="#3a3a3a"/></symbol>
</defs><rect x="300.5" y="104.5" width="25" height="24.5" rx="2" fill="url(#vBox)" stroke="#7b7c81" stroke-width="1"/><rect x="301.5" y="105.5" width="23" height="22.5" rx="1.5" fill="none" stroke="#ffffff" stroke-opacity="0.12" stroke-width="1"/><rect x="300.5" y="132" width="25" height="24.5" rx="2" fill="url(#vBox)" stroke="#7b7c81" stroke-width="1"/><rect x="301.5" y="133" width="23" height="22.5" rx="1.5" fill="none" stroke="#ffffff" stroke-opacity="0.12" stroke-width="1"/><rect x="300.5" y="168.5" width="25" height="24.5" rx="2" fill="url(#vBox)" stroke="#8e8f94" stroke-width="1"/><rect x="301.5" y="169.5" width="23" height="22.5" rx="1.5" fill="none" stroke="#ffffff" stroke-opacity="0.12" stroke-width="1"/><rect x="300.5" y="196" width="25" height="24.5" rx="2" fill="url(#vBox)" stroke="#8e8f94" stroke-width="1"/><rect x="301.5" y="197" width="23" height="22.5" rx="1.5" fill="none" stroke="#ffffff" stroke-opacity="0.12" stroke-width="1"/><rect x="300.5" y="223.8" width="25" height="24.5" rx="2" fill="url(#vBox)" stroke="#8e8f94" stroke-width="1"/><rect x="301.5" y="224.8" width="23" height="22.5" rx="1.5" fill="none" stroke="#ffffff" stroke-opacity="0.12" stroke-width="1"/><rect x="300.5" y="251.3" width="25" height="24.5" rx="2" fill="url(#vBox)" stroke="#6e6f74" stroke-width="1"/><rect x="301.5" y="252.3" width="23" height="22.5" rx="1.5" fill="none" stroke="#ffffff" stroke-opacity="0.12" stroke-width="1"/><rect x="300.5" y="278.8" width="25" height="24.5" rx="2" fill="url(#vBox)" stroke="#8e8f94" stroke-width="1"/><rect x="301.5" y="279.8" width="23" height="22.5" rx="1.5" fill="none" stroke="#ffffff" stroke-opacity="0.12" stroke-width="1"/><rect x="300.5" y="306.3" width="25" height="24.5" rx="2" fill="url(#vBox)" stroke="#6e6f74" stroke-width="1"/><rect x="301.5" y="307.3" width="23" height="22.5" rx="1.5" fill="none" stroke="#ffffff" stroke-opacity="0.12" stroke-width="1"/><rect x="300.5" y="333.8" width="25" height="24.5" rx="2" fill="url(#vBox)" stroke="#6e6f74" stroke-width="1"/><rect x="301.5" y="334.8" width="23" height="22.5" rx="1.5" fill="none" stroke="#ffffff" stroke-opacity="0.12" stroke-width="1"/><path d="M306.4 112.5L312.6 109.4 319.6 113.3 313 116.5Z" fill="#e6e6e6"/><path d="M306.4 112.5L313 116.5V126L306.4 122Z" fill="#cfcfcf"/><path d="M313 116.5L319.6 113.3V123L313 126Z" fill="#a0a0a0"/><path d="M313.5 125.5L321 121.5 324 123.5 316 126.5Z" fill="#333"/><path d="M302 120.5H312V127H302Z" fill="url(#vClap)"/><path d="M302 118.8H312V120.8H302Z" fill="#555"/><path d="M303.5 120.8L305 118.8H306.5L305 120.8ZM307.5 120.8L309 118.8H310.5L309 120.8Z" fill="#f0f0f0"/><path d="M309.3 136.3L311.3 135.4C312.1 137.1 313.9 137.1 314.7 135.4L316.7 136.3 321.8 139.8 319.8 143.2 317.8 142.2V151.8H308.2V142.2L306.2 143.2 304.2 139.8Z" fill="#9c9ca0" stroke="#68686c" stroke-width="1.3" stroke-linejoin="round"/><path d="M311.8 141.5h2.4v2.8l-1.2 1-1.2-1z" fill="none" stroke="#6a6a6e" stroke-width="0.9"/><path d="M308.5 149.3H317.5" stroke="#6a6a6e" stroke-width="1.2"/><circle cx="304.6" cy="152.3" r="1.7" fill="#e8e8e8" stroke="#888" stroke-width="0.5"/><path d="M309 172L311 171C312 173 314 173 315 171L317 172 322 175.5 320 179 318 178V189H308V178L306 179 304 175.5Z" fill="url(#vShirt)"/><use href="#eye" x="306.5" y="187.5"/><path d="M310 205L319.5 198.5C320.5 198 321.5 199 321.5 201V204" fill="none" stroke="#555" stroke-width="0.9"/><circle cx="308.5" cy="206.5" r="3.9" fill="url(#vDot)"/><path d="M314.5 210L317.5 207.5 320 208 322.5 210.5V218H314.5V213L313 214Z" fill="url(#vShirt)"/><use href="#eye" x="306.5" y="215"/><ellipse cx="313" cy="229.5" rx="3" ry="3.4" fill="url(#vShirt)"/><path d="M311.5 232.5H314.5V235C318 236 320 238 320.5 244H306.5C307 238 309 236 311.5 235Z" fill="url(#vShirt)"/><use href="#eye" x="306.5" y="242.5"/><path d="M304.5 258.5L311 259 314 271 306 270Z" fill="#dedede"/><path d="M308 256C312 254.5 317 254 321.5 255L318.5 270C314.5 268.5 310.5 268.5 306 270Z" fill="url(#vBlue)"/><path d="M306 270C310 268 315 268 318.5 270 314 272 309 272 306 270Z" fill="#eee"/><path d="M323 272.5V274.5H321Z" fill="#777"/><path d="M305 285L309.5 286 311 297 307 296Z" fill="#9a9a9a"/><path d="M309 284C313 283 317 283 320 284L318 297C315 296 311 296 307 297Z" fill="url(#vGray)"/><circle cx="313" cy="314" r="4.6" fill="url(#vSkin)"/><path d="M310 318H316V322C319 323 321 325 321 328H305C305 325 307 323 310 322Z" fill="url(#vSkin)"/><path d="M323 327.5V329.5H321Z" fill="#777"/><circle cx="313.5" cy="345" r="8" fill="url(#vGlobe)"/><path d="M305.5 345H321.5M306.5 341H320.5M306.5 349H320.5M313.5 337V353M309.5 338C308 342 308 348 309.5 352M317.5 338C319 342 319 348 317.5 352" fill="none" stroke="#cfe8ff" stroke-width="0.8"/><use href="#eye" x="306.5" y="353"/></svg><!--/VPI-->
<!--FILES--><svg style="left:0;top:0" width="1440" height="935"><defs>
<linearGradient id="fBack" x1="0" y1="0" x2="1" y2="1"><stop offset="0" stop-color="#c8e4ee"/><stop offset="0.5" stop-color="#9fc0dc"/><stop offset="1" stop-color="#a8c6e6"/></linearGradient>
<linearGradient id="fFront" x1="0" y1="0" x2="0" y2="1"><stop offset="0" stop-color="#b0d8ea"/><stop offset="0.4" stop-color="#bfe8e6"/><stop offset="1" stop-color="#e8eeff"/></linearGradient>
<linearGradient id="fPage" x1="0" y1="0" x2="1" y2="0"><stop offset="0" stop-color="#b8bcc4"/><stop offset="0.3" stop-color="#e4ecf2"/><stop offset="1" stop-color="#eef2f6"/></linearGradient>
<linearGradient id="tBody" x1="0" y1="0" x2="1" y2="0.3"><stop offset="0" stop-color="#c4c4c4"/><stop offset="0.6" stop-color="#ececec"/><stop offset="1" stop-color="#f6f6f6"/></linearGradient>
<linearGradient id="tBodyV" x1="0" y1="0" x2="0" y2="1"><stop offset="0" stop-color="#ffffff" stop-opacity="0.2"/><stop offset="1" stop-color="#000" stop-opacity="0.1"/></linearGradient>
</defs><path d="M60 423L86 421.7V464.4L60 466Z" fill="url(#fBack)"/><path d="M60 426L79 429V467L60 466Z" fill="url(#fPage)"/><path d="M50 416.7L60 423V469L50 455.6Z" fill="url(#fFront)"/><path d="M133.3 422.3L124 435.3L130 439.3L133.3 435.3Z" fill="#e8e8e8"/><path d="M163.9 422.3L173.3 435.3L167.3 439.3L163.9 435.3Z" fill="#e0e0e0"/><path d="M133.3 422.3C136.3 418.3 142.60000000000002 418.3 141.60000000000002 417.3H155.60000000000002C154.60000000000002 418.3 160.9 418.3 163.9 422.3V473.3C153.60000000000002 474.3 143.60000000000002 474.3 133.3 473.3Z" fill="url(#tBody)"/><path d="M133.3 422.3V435.3" stroke="#333" stroke-width="1.2"/><path d="M163.9 422.3V435.3" stroke="#333" stroke-width="1.2"/><path d="M141.60000000000002 415.3H155.60000000000002V420.3C152.60000000000002 422.3 144.60000000000002 422.3 141.60000000000002 420.3Z" fill="#2a2a2a"/><path d="M142.60000000000002 416.3H154.60000000000002" stroke="#ddd" stroke-width="0.8"/><path d="M51.3 528L39.8 541L45.8 545L51.3 541Z" fill="#e8e8e8"/><path d="M84.7 528L97 541L91 545L84.7 541Z" fill="#e0e0e0"/><path d="M51.3 528C54.3 524 62.0 524 61.0 523H75.0C74.0 524 81.7 524 84.7 528V581.5C73.0 582.5 63.0 582.5 51.3 581.5Z" fill="url(#tBody)"/><path d="M51.3 528V541" stroke="#333" stroke-width="1.2"/><path d="M84.7 528V541" stroke="#333" stroke-width="1.2"/><path d="M61.0 521H75.0V526C72.0 528 64.0 528 61.0 526Z" fill="#2a2a2a"/><path d="M62.0 522H74.0" stroke="#ddd" stroke-width="0.8"/></svg><div class="t" style="left:65px;top:480px;color:#e0e0e0">..</div>
<div class="t" style="left:115px;top:480px;color:#e0e0e0;letter-spacing:-0.1px">Femal...zpac</div>
<div class="t" style="left:35px;top:589px;color:#e0e0e0;letter-spacing:-0.1px">Male...zpac</div><!--/FILES-->
</body></html>
